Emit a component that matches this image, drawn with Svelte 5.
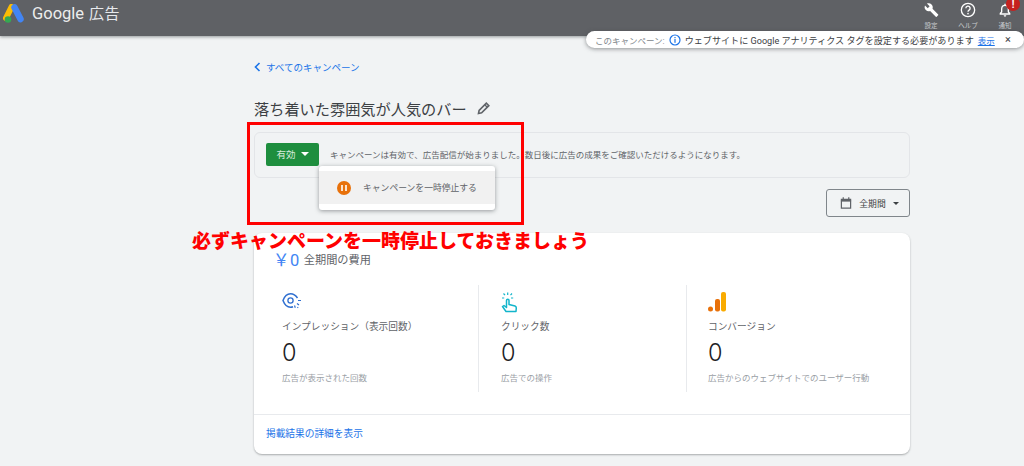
<script>
  const stats = [
    { label: 'インプレッション（表示回数）', desc: '広告が表示された回数', icon: 'eye' },
    { label: 'クリック数', desc: '広告での操作', icon: 'click' },
    { label: 'コンバージョン', desc: '広告からのウェブサイトでのユーザー行動', icon: 'bars' }
  ];
</script>

<div class="page">
  <header class="topbar">
    <div class="brand">
      <svg class="logo" width="22" height="20" viewBox="0 0 22 20">
        <path d="M8.500 3 L3 14" stroke="#fbbc04" stroke-width="6" stroke-linecap="round"/>
        <path d="M11.500 3.500 L17.500 15" stroke="#4285f4" stroke-width="6.500" stroke-linecap="round"/>
        <circle cx="5" cy="15.500" r="3.300" fill="#34a853"/>
      </svg>
      <span class="google">Google</span>
      <span class="ads">広告</span>
    </div>
    <div class="tools">
      <div class="tool">
        <svg width="15" height="16" viewBox="0 0 24 24"><path fill="#fff" d="M22.700 19l-9.100-9.100c.9-2.300.4-5-1.500-6.900-2-2-5-2.400-7.400-1.300L9 6 6 9 1.600 4.700C.4 7.100.9 10.100 2.900 12.100c1.900 1.900 4.600 2.400 6.900 1.500l9.100 9.100c.4.400 1 .4 1.400 0l2.300-2.300c.5-.4.5-1.100.1-1.400z"/></svg>
        <span>設定</span>
      </div>
      <div class="tool">
        <svg width="16" height="16" viewBox="0 0 24 24"><circle cx="12" cy="12" r="10" fill="none" stroke="#fff" stroke-width="2"/><path fill="none" stroke="#fff" stroke-width="2" d="M8.800 9.500a3.200 3.200 0 1 1 4.800 2.700c-1 .6-1.600 1.200-1.600 2.600"/><circle cx="12" cy="17.500" r="1.200" fill="#fff"/></svg>
        <span>ヘルプ</span>
      </div>
      <div class="tool bell">
        <svg width="16" height="16" viewBox="0 0 24 24"><path fill="none" stroke="#fff" stroke-width="2" d="M5 18v-1l2-2v-4.500C7 7.500 9 5 12 5s5 2.500 5 5.500V15l2 2v1z"/><path fill="#fff" d="M10 20h4a2 2 0 0 1-4 0zM11 2.500h2V5h-2z"/></svg>
        <span>通知</span>
        <b class="badge">!</b>
      </div>
    </div>
  </header>

  <div class="notice">
    <span class="muted">このキャンペーン:</span>
    <svg width="12" height="12" viewBox="0 0 12 12"><circle cx="6" cy="6" r="5" fill="none" stroke="#1a73e8" stroke-width="1.200"/><rect x="5.400" y="5" width="1.200" height="3.800" fill="#1a73e8"/><rect x="5.400" y="3" width="1.200" height="1.200" fill="#1a73e8"/></svg>
    <span class="main-msg">ウェブサイトに Google アナリティクス タグを設定する必要があります</span>
    <span class="notice-link">表示</span>
    <span class="close">×</span>
  </div>

  <main class="content">
    <a class="back" href="#top">
      <svg width="7" height="10" viewBox="0 0 7 10"><path d="M5.500 1 L1.500 5 L5.500 9" fill="none" stroke="#1a73e8" stroke-width="1.600"/></svg>
      すべてのキャンペーン
    </a>

    <h1 class="title">
      落ち着いた雰囲気が人気のバー
      <svg width="15" height="15" viewBox="0 0 24 24"><path fill="none" stroke="#5f6368" stroke-width="2.600" d="M4 20l1-5L16.500 3.500l4 4L9 19z"/><path stroke="#5f6368" stroke-width="2" d="M14 6l4 4"/></svg>
    </h1>

    <section class="status">
      <div class="status-btn">有効 <i class="caret"></i></div>
      <p>キャンペーンは有効で、広告配信が始まりました。数日後に広告の成果をご確認いただけるようになります。</p>
      <div class="menu">
        <div class="menu-item">
          <span class="pause"><i></i><i></i></span>
          キャンペーンを一時停止する
        </div>
      </div>
    </section>

    <div class="range-row">
      <div class="range">
        <svg width="12" height="14" viewBox="0 0 13 14"><path fill="none" stroke="#5f6368" stroke-width="1.300" d="M1.500 3h10v9.500h-10z"/><path stroke="#5f6368" stroke-width="2" d="M1 4.500h11"/><path stroke="#5f6368" stroke-width="1.300" d="M3.500 .8v2.400M9.500 .8v2.400"/></svg>
        <span>全期間</span>
        <i class="caret dark"></i>
      </div>
    </div>

    <section class="card">
      <div class="cost"><span class="yen">￥0</span> 全期間の費用</div>
      <div class="stats">
        {#each stats as s}
          <div class="stat">
            <div class="icon">
              {#if s.icon === 'eye'}
                <svg width="20" height="18" viewBox="0 0 20 18">
                  <path fill="none" stroke="#2f6fd0" stroke-width="1.500" d="M15.500 6C13.500 3 11 1.800 8.500 1.800 5 1.800 2.500 4.500 1 8.500c1.500 4 4 6.700 7.500 6.700 1 0 1.800-.2 2.500-.5"/>
                  <circle cx="8.500" cy="8.500" r="2.600" fill="none" stroke="#2f6fd0" stroke-width="1.300"/>
                  <path stroke="#2f6fd0" stroke-width="1.200" d="M16 8.500h3M15 11.500l2 1.500M12.500 13.500l.8 2.200M15.500 15l.6.800"/>
                </svg>
              {:else if s.icon === 'click'}
                <svg width="18" height="22" viewBox="0 0 18 22">
                  <path fill="none" stroke="#12b5cb" stroke-width="1.500" stroke-linejoin="round" d="M5 19.500 1.500 14.500l1.500-1 2.500 2V8.500a1.200 1.200 0 0 1 2.500 0v4l6 1.500c1 .3 1.300 1 1.300 2l-.3 3.500z"/>
                  <path stroke="#12b5cb" stroke-width="1.200" d="M1 6h2.200M10 6h2.200M6.700 .5v2.400M2.500 1.500l1.500 1.700M11 1.500 9.500 3.200"/>
                </svg>
              {:else}
                <svg width="18" height="20" viewBox="0 0 18 20">
                  <circle cx="2.500" cy="17" r="2.500" fill="#e8710a"/>
                  <rect x="7" y="7" width="5" height="12.500" rx="2" fill="#e8710a"/>
                  <rect x="13" y="0" width="5" height="19.500" rx="2" fill="#f9ab00"/>
                </svg>
              {/if}
            </div>
            <div class="label">{s.label}</div>
            <div class="value">0</div>
            <div class="desc">{s.desc}</div>
          </div>
        {/each}
      </div>
      <div class="card-foot"><span>掲載結果の詳細を表示</span></div>
    </section>
  </main>

  <div class="red-box"></div>
  <div class="red-note">必ずキャンペーンを一時停止しておきましょう</div>
</div>

<style>
  :global(body) {
    margin: 0;
    background: #f1f3f4;
  }

  .page {
    position: relative;
    width: 1024px;
    height: 466px;
    overflow: hidden;
    background: #f1f3f4;
    color: #3c4043;
    font-family: Roboto, "Noto Sans CJK JP", sans-serif;
  }

  .topbar {
    height: 36px;
    background: #5f6165;
    box-shadow: 0 1px 3px rgba(60, 64, 67, 0.5);
    display: flex;
    justify-content: space-between;
    color: #fff;
  }

  .brand {
    display: flex;
    align-items: center;
    height: 27px;
    padding-left: 3px;
  }

  .logo {
    margin-right: 7px;
  }

  .google {
    font-size: 16.500px;
    color: #eceded;
    margin-right: 5px;
  }

  .ads {
    font-size: 15px;
    color: #e8eaed;
    letter-spacing: 0.5px;
    padding-bottom: 2px;
  }

  .tools {
    display: flex;
    gap: 15px;
    padding-right: 8px;
  }

  .tool {
    position: relative;
    width: 22px;
    display: flex;
    flex-direction: column;
    align-items: center;
    font-size: 6.500px;
    color: #c9cccf;
    padding-top: 2px;
  }

  .tool span {
    white-space: nowrap;
    margin-top: 2px;
  }

  .badge {
    position: absolute;
    top: -3px;
    left: 12px;
    width: 14px;
    height: 14px;
    border-radius: 50%;
    background: #c5221f;
    color: #fff;
    font-size: 10px;
    line-height: 16px;
    text-align: center;
  }

  .notice {
    position: absolute;
    left: 586px;
    top: 31px;
    width: 438px;
    height: 17px;
    box-sizing: border-box;
    padding-left: 9px;
    background: #fff;
    border-radius: 9px;
    box-shadow: 0 1px 4px rgba(60, 64, 67, 0.55);
    display: flex;
    align-items: center;
    gap: 4px;
    font-size: 8.500px;
    color: #3c4043;
    white-space: nowrap;
  }

  .notice .muted {
    color: #80868b;
  }

  .notice .main-msg {
    font-size: 9.100px;
  }

  .notice-link {
    color: #1a73e8;
    text-decoration: underline;
  }

  .close {
    position: absolute;
    left: 419px;
    font-size: 11px;
    color: #3c4043;
  }

  .content {
    width: 656px;
    margin-left: 254px;
    display: flex;
    flex-direction: column;
  }

  .back {
    margin-top: 24px;
    height: 14px;
    display: flex;
    align-items: center;
    gap: 5px;
    font-size: 9.500px;
    color: #1a73e8;
    text-decoration: none;
  }

  .title {
    margin: 23px 0 0;
    height: 22px;
    display: flex;
    align-items: center;
    gap: 9px;
    font-size: 15.200px;
    font-weight: 400;
    color: #3c4043;
    white-space: nowrap;
  }

  .status {
    position: relative;
    margin-top: 13px;
    height: 46px;
    box-sizing: border-box;
    padding-left: 11px;
    display: flex;
    align-items: center;
    gap: 11px;
    border: 1px solid #e3e5e8;
    border-radius: 6px;
  }

  .status p {
    margin: 0 0 3px;
    font-size: 8.500px;
    color: #5f6368;
    white-space: nowrap;
  }

  .status-btn {
    width: 53px;
    height: 23px;
    margin-bottom: 2px;
    border-radius: 2px;
    background: #1e8e3e;
    color: #d7ecdc;
    font-size: 9.500px;
    display: flex;
    align-items: center;
    justify-content: center;
    gap: 5px;
  }

  .caret {
    width: 0;
    height: 0;
    border-left: 4px solid transparent;
    border-right: 4px solid transparent;
    border-top: 4px solid #fff;
  }

  .caret.dark {
    border-left-width: 3.500px;
    border-right-width: 3.500px;
    border-top-width: 3.500px;
    border-top-color: #3c4043;
  }

  .menu {
    position: absolute;
    left: 64px;
    top: 33px;
    width: 176px;
    height: 44px;
    box-sizing: border-box;
    padding: 5px 0;
    background: #fff;
    border-radius: 3px;
    box-shadow: 0 1px 4px rgba(60, 64, 67, 0.5);
  }

  .menu-item {
    height: 33px;
    padding-left: 18px;
    background: #f1f1f1;
    display: flex;
    align-items: center;
    gap: 12px;
    font-size: 8.800px;
    color: #5f6368;
    white-space: nowrap;
  }

  .pause {
    width: 14px;
    height: 14px;
    border-radius: 50%;
    background: #e8710a;
    display: flex;
    align-items: center;
    justify-content: center;
    gap: 1.500px;
  }

  .pause i {
    width: 1.800px;
    height: 6px;
    background: #fbe3cd;
  }

  .range-row {
    display: flex;
    justify-content: flex-end;
    margin-top: 11px;
  }

  .range {
    width: 84px;
    height: 28px;
    box-sizing: border-box;
    padding-left: 3px;
    border: 1px solid #80868b;
    border-radius: 3px;
    display: flex;
    align-items: center;
    justify-content: center;
    gap: 7px;
    font-size: 8.800px;
    color: #3c4043;
  }

  .card {
    margin-top: 16px;
    height: 221px;
    background: #fff;
    border-radius: 8px;
    box-shadow: 0 1px 2px rgba(60, 64, 67, 0.4);
    display: flex;
    flex-direction: column;
  }

  .cost {
    padding: 14px 0 0 19px;
    height: 24px;
    font-size: 11.200px;
    color: #5f6368;
    display: flex;
    align-items: center;
    gap: 4px;
  }

  .yen {
    font-size: 16.500px;
    color: #4285f4;
    letter-spacing: 0.5px;
  }

  .stats {
    display: grid;
    grid-template-columns: 224px 208px 224px;
    margin-top: 14px;
    height: 107px;
  }

  .stat {
    padding-left: 22px;
    border-left: 1px solid #e8eaed;
    display: flex;
    flex-direction: column;
  }

  .stat:first-child {
    padding-left: 28px;
    border-left: none;
  }

  .stat:last-child {
    padding-left: 21px;
  }

  .icon {
    height: 24px;
    margin-top: 7px;
    display: flex;
    align-items: flex-start;
  }

  .label {
    margin-top: 4px;
    font-size: 9.700px;
    line-height: 14px;
    color: #5f6368;
    white-space: nowrap;
  }

  .value {
    margin-top: 5px;
    font-family: Inter, Roboto, sans-serif;
    font-size: 23.500px;
    font-weight: 300;
    line-height: 27px;
    color: #202124;
  }

  .desc {
    margin-top: 6px;
    font-size: 8.500px;
    line-height: 12px;
    color: #9aa0a6;
    white-space: nowrap;
  }

  .card-foot {
    margin-top: 22px;
    flex: 1;
    padding: 0 0 4px 12px;
    border-top: 1px solid #e8eaed;
    display: flex;
    align-items: center;
    font-size: 9.700px;
    color: #1a73e8;
  }

  .red-box {
    position: absolute;
    left: 247px;
    top: 122px;
    width: 277px;
    height: 103px;
    box-sizing: border-box;
    border: 3px solid #f00;
  }

  .red-note {
    position: absolute;
    left: 192px;
    top: 231px;
    font-size: 19px;
    line-height: 22px;
    font-weight: 900;
    color: #f00;
    white-space: nowrap;
  }
</style>
